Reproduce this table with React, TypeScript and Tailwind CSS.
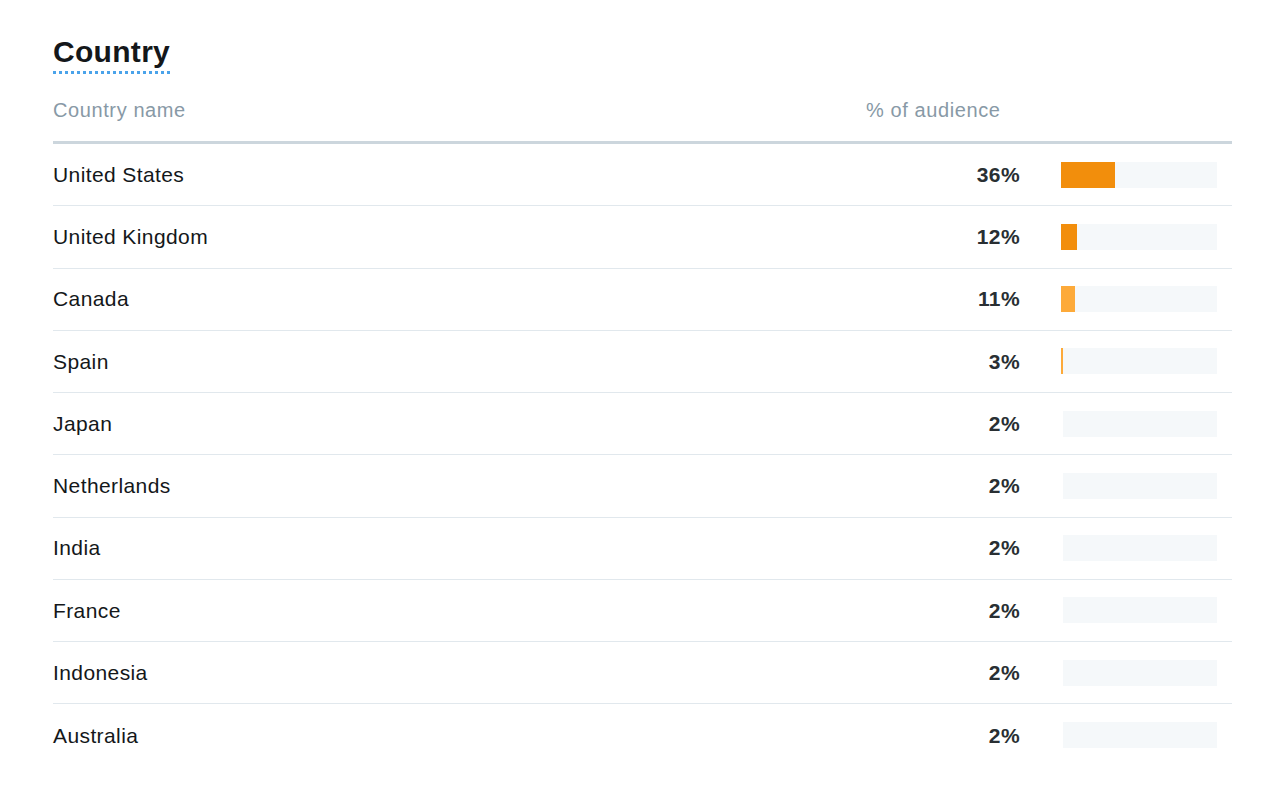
import React from 'react'

// audience by country
const rows = [
  { name: 'United States', pct: 36, bar: 54, color: 'bg-[#f28e0c]' },
  { name: 'United Kingdom', pct: 12, bar: 16, color: 'bg-[#f28e0c]' },
  { name: 'Canada', pct: 11, bar: 14, color: 'bg-[#fdaa3a]' },
  { name: 'Spain', pct: 3, bar: 2, color: 'bg-[#fdaa3a]' },
  { name: 'Japan', pct: 2, bar: 0, color: 'bg-[#fdaa3a]' },
  { name: 'Netherlands', pct: 2, bar: 0, color: 'bg-[#fdaa3a]' },
  { name: 'India', pct: 2, bar: 0, color: 'bg-[#fdaa3a]' },
  { name: 'France', pct: 2, bar: 0, color: 'bg-[#fdaa3a]' },
  { name: 'Indonesia', pct: 2, bar: 0, color: 'bg-[#fdaa3a]' },
  { name: 'Australia', pct: 2, bar: 0, color: 'bg-[#fdaa3a]' },
]

export default function App() {
  return (
    <div className="min-h-screen w-full bg-white font-['Liberation_Sans',Arial,sans-serif]">
      <div className="w-[1179px] ml-[53px] pt-[35px]">
        <h2 className="inline-block text-[30px] leading-[34px] font-bold tracking-[0.3px] text-[#14171a] border-b-[3px] border-dotted border-[#4aa3ea] pb-[2px]">
          Country
        </h2>

        {/* table header */}
        <div className="flex items-center h-[70px] pt-[4px] border-b-[3px] border-[#ccd6dd] text-[20px] tracking-[0.6px] text-[#8899a6]">
          <div className="w-[813px]">Country name</div>
          <div>% of audience</div>
        </div>

        {rows.map((r, i) => (
          <div
            key={r.name}
            className={`flex items-center h-[62.25px] text-[21px] tracking-[0.4px] text-[#14171a] ${i < rows.length - 1 ? 'border-b border-[#e1e8ed]' : ''}`}
          >
            <div className="w-[813px]">{r.name}</div>
            <div className="w-[154px] text-right font-bold text-[#292f33]">{r.pct}%</div>
            <div className={`${r.bar > 0 ? 'ml-[41px] w-[156px]' : 'ml-[43px] w-[154px]'} h-[26px] bg-[#f5f8fa] flex`}>
              {r.bar > 0 && <div className={`h-full ${r.color}`} style={{ width: r.bar }} />}
            </div>
          </div>
        ))}
      </div>
    </div>
  )
}
